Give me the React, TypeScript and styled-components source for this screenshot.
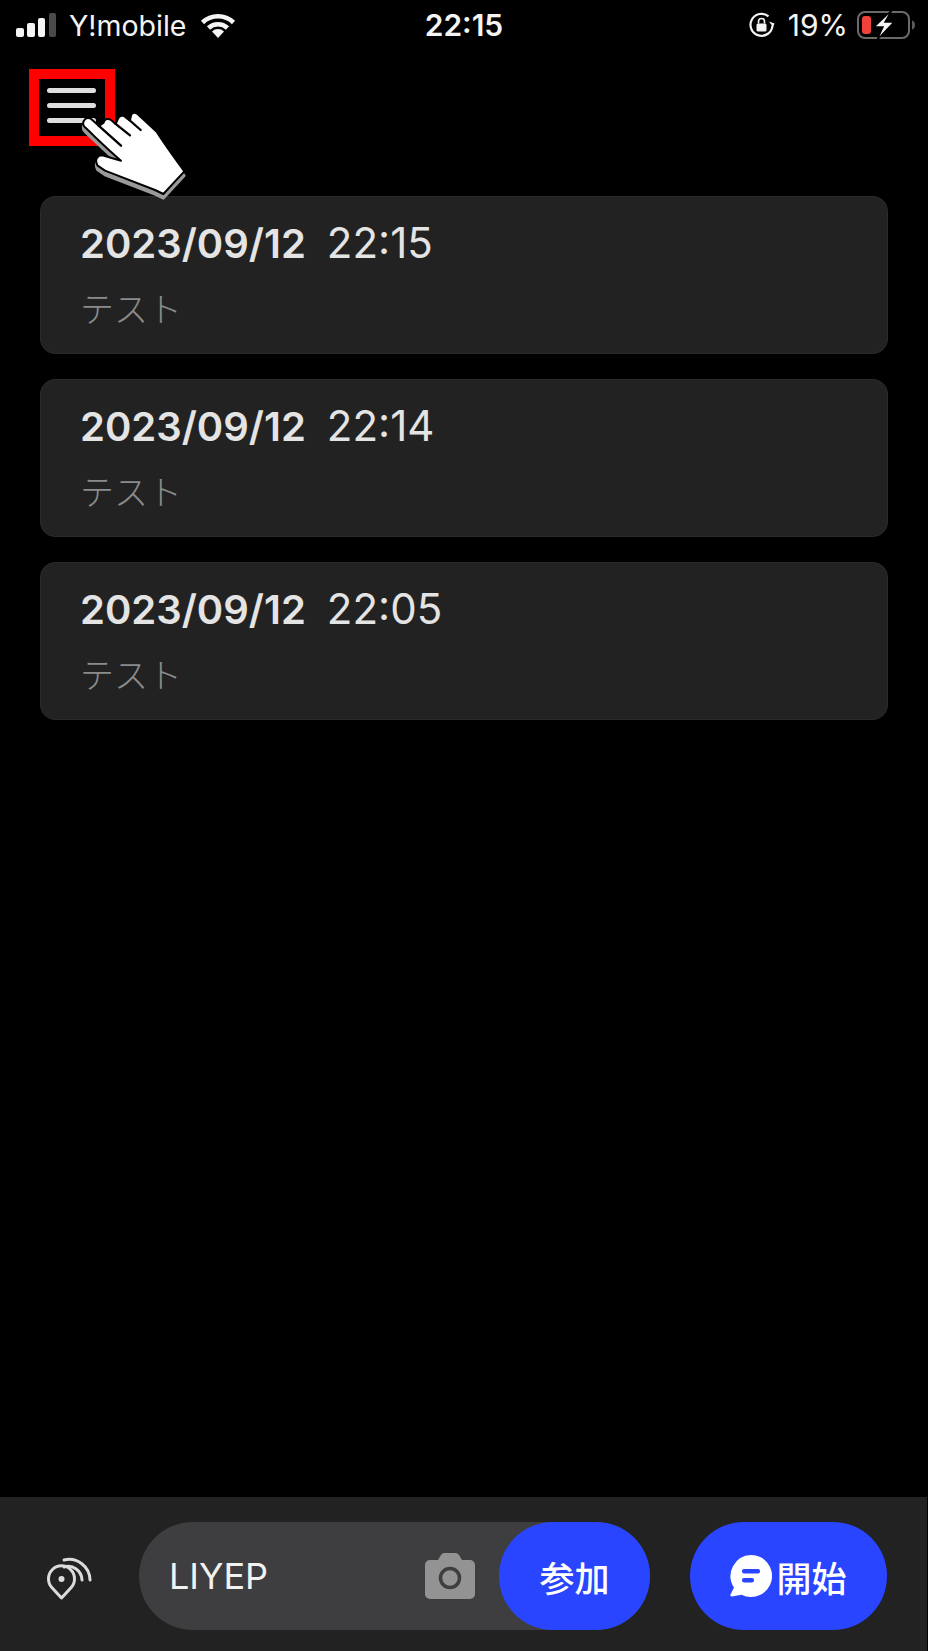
import React from "react";
import styled, { createGlobalStyle } from "styled-components";

const GlobalStyle = createGlobalStyle`
  html, body {
    margin: 0;
    padding: 0;
    background: #000;
  }
  * {
    box-sizing: border-box;
  }
`;

const FONT = `Inter, "Noto Sans CJK JP", sans-serif`;

const sessions = [
  { date: "2023/09/12", time: "22:15", title: "テスト" },
  { date: "2023/09/12", time: "22:14", title: "テスト" },
  { date: "2023/09/12", time: "22:05", title: "テスト" },
];

const HAND_OUTLINE =
  "M27 62 C32 52 45 52 52 60 L72 78 L86 68 C88 56 100 54 108 60 L122 72 L128 58 C132 46 145 44 152 52 L165 62 L168 46 C172 36 182 36 190 44 L245 95 C270 135 300 175 328 214 L265 282 L240 270 L90 212 L68 197 C58 180 66 166 82 166 L138 182 C100 150 60 110 30 82 C22 74 23 68 27 62 Z";

const SignalIcon = () => (
  <svg width="42" height="24" viewBox="0 0 42 24">
    <rect x="0" y="15" width="8" height="9" rx="2" fill="#f4f4f4" />
    <rect x="11" y="10" width="8" height="14" rx="2" fill="#f4f4f4" />
    <rect x="22" y="5" width="7" height="19" rx="2" fill="#f4f4f4" />
    <rect x="33" y="0" width="7" height="24" rx="2" fill="#4a4a4a" />
  </svg>
);

const WifiIcon = () => (
  <svg width="38" height="28" viewBox="0 0 38 28">
    <path d="M19 27l-6-6.6a8.6 8.6 0 0 1 12 0z" fill="#f4f4f4" />
    <path d="M3.5 11.5a22.500 22.500 0 0 1 31 0" fill="none" stroke="#f4f4f4" strokeWidth="4.600" />
    <path d="M9.500 17a14 14 0 0 1 19 0" fill="none" stroke="#f4f4f4" strokeWidth="4.600" />
  </svg>
);

const LockRotationIcon = () => (
  <svg width="28" height="28" viewBox="0 0 28 28">
    <path d="M24.500 14.500A11 11 0 1 1 20.500 5.300" fill="none" stroke="#f4f4f4" strokeWidth="2.200" />
    <path d="M21 10.500l5.500 2-1.500 3.500z" fill="#f4f4f4" />
    <rect x="8.500" y="12.500" width="10" height="8" rx="1.500" fill="#f4f4f4" />
    <path d="M10.500 12.500V10.500a3 3 0 0 1 6 0v2" fill="none" stroke="#f4f4f4" strokeWidth="1.600" />
  </svg>
);

const BatteryIcon = () => (
  <svg width="60" height="32" viewBox="0 0 60 32">
    <rect x="2" y="3" width="51" height="26" rx="7" fill="none" stroke="#6a6a6a" strokeWidth="2" />
    <rect x="6" y="7" width="9" height="18" rx="3" fill="#f0413a" />
    <path d="M56 11.500c2 .5 3 2 3 4.500s-1 4-3 4.500z" fill="#5a5a5a" />
    <path d="M36 1 L18 18 H27 L21 31 L38 13 H29 Z" fill="#f8f8f8" stroke="#000" strokeWidth="1.500" />
  </svg>
);

const HandPointer = () => (
  <svg width="124" height="108" viewBox="0 0 372 324">
    <path
      d={HAND_OUTLINE}
      fill="#9a9a9a"
      stroke="#9a9a9a"
      strokeWidth="8"
      strokeLinejoin="round"
      transform="translate(0 13)"
    />
    <path d={HAND_OUTLINE} fill="#fff" stroke="#000" strokeWidth="6" strokeLinejoin="round" />
    <g stroke="#000" strokeWidth="7" strokeLinecap="round">
      <path d="M70 76 L138 137" />
      <path d="M120 70 L165 106" />
      <path d="M163 60 L197 90" />
    </g>
  </svg>
);

const NearbyIcon = () => (
  <svg width="46" height="50" viewBox="0 0 46 50">
    <path
      d="M15.500 47 L5.800 36.500 A13 13 0 1 1 25.200 36.500 Z"
      fill="none"
      stroke="#dcdcdc"
      strokeWidth="3"
      strokeLinejoin="round"
    />
    <circle cx="15.500" cy="28" r="3" fill="#dcdcdc" />
    <path d="M18 9 A 21 21 0 0 1 44 29" fill="none" stroke="#dcdcdc" strokeWidth="3" strokeLinecap="round" />
    <path d="M18 16 A 14 14 0 0 1 36 29" fill="none" stroke="#dcdcdc" strokeWidth="3" strokeLinecap="round" />
  </svg>
);

const CameraIcon = () => (
  <svg width="50" height="46" viewBox="0 0 50 46">
    <path
      d="M5 7 H13 L16 2 C16.500 1 18 0 19 0 H31 C32 0 33.500 1 34 2 L37 7 H45 A5 5 0 0 1 50 12 V41 A5 5 0 0 1 45 46 H5 A5 5 0 0 1 0 41 V12 A5 5 0 0 1 5 7 Z"
      fill="#939393"
    />
    <circle cx="25" cy="25" r="9.500" fill="none" stroke="#3e3e40" strokeWidth="3.500" />
  </svg>
);

const ChatIcon = () => (
  <svg width="42" height="42" viewBox="0 0 42 42">
    <path d="M21 0a21 21 0 1 1-9.500 39.700L2 41.500c-1.500.2-2-.8-1.500-2L4 32.500A21 21 0 0 1 21 0z" fill="#fff" />
    <rect x="12" y="14" width="18" height="4.500" rx="2" fill="#2a45ff" />
    <rect x="12" y="23" width="12" height="4.500" rx="2" fill="#2a45ff" />
  </svg>
);

export default function App() {
  return (
    <>
      <GlobalStyle />
      <Page>
        <StatusBar>
          <StatusLeft>
            <SignalIcon />
            <Carrier>Y!mobile</Carrier>
            <WifiIcon />
          </StatusLeft>
          <Clock>22:15</Clock>
          <StatusRight>
            <LockRotationIcon />
            <Percent>19%</Percent>
            <BatteryIcon />
          </StatusRight>
        </StatusBar>

        <MenuRow>
          <MenuHighlight>
            <MenuLine />
            <MenuLine />
            <MenuLine />
          </MenuHighlight>
          <HandOverlay>
            <HandPointer />
          </HandOverlay>
        </MenuRow>

        <SessionList>
          {sessions.map((session) => (
            <SessionCard key={session.time}>
              <SessionHeading>
                <SessionDate>{session.date}</SessionDate>
                <SessionTime>{session.time}</SessionTime>
              </SessionHeading>
              <SessionTitle>{session.title}</SessionTitle>
            </SessionCard>
          ))}
        </SessionList>

        <BottomBar>
          <NearbyButton>
            <NearbyIcon />
          </NearbyButton>
          <CodeField>
            <CodeText>LIYEP</CodeText>
            <CameraIcon />
            <JoinButton>参加</JoinButton>
          </CodeField>
          <StartButton>
            <ChatIcon />
            開始
          </StartButton>
        </BottomBar>
      </Page>
    </>
  );
}

const Page = styled.div`
  width: 928px;
  height: 1651px;
  display: flex;
  flex-direction: column;
  background: #000;
  font-family: ${FONT};
  overflow: hidden;
`;

const StatusBar = styled.div`
  height: 50px;
  flex: none;
  padding: 0 12px 0 16px;
  display: grid;
  grid-template-columns: 1fr auto 1fr;
  align-items: center;
  color: #f4f4f4;
`;

const StatusLeft = styled.div`
  display: flex;
  align-items: center;
  gap: 11px;
`;

const Carrier = styled.span`
  font-size: 28.5px;
  margin-right: 2px;
`;

const Clock = styled.span`
  font-size: 30px;
  font-weight: 600;
  margin-right: 4px;
`;

const StatusRight = styled.div`
  display: flex;
  align-items: center;
  justify-content: flex-end;
  gap: 8px;
`;

const Percent = styled.span`
  font-size: 30px;
  margin-left: 4px;
`;

const MenuRow = styled.div`
  position: relative;
  height: 146px;
  flex: none;
  padding: 19px 0 0 29px;
`;

const MenuHighlight = styled.div`
  width: 86px;
  height: 77px;
  border: 10px solid #ff0000;
  padding: 9px 9px 0 8px;
  display: flex;
  flex-direction: column;
  gap: 10px;
`;

const MenuLine = styled.div`
  height: 5px;
  border-radius: 3px;
  background: #dedede;
`;

const HandOverlay = styled.div`
  position: absolute;
  left: 75px;
  top: 50px;
  line-height: 0;
`;

const SessionList = styled.div`
  display: flex;
  flex-direction: column;
  gap: 25px;
  padding: 0 40px;
`;

const SessionCard = styled.div`
  height: 158px;
  padding: 21px 40px 0 39px;
  background: #222222;
  border: 1px solid #2b2b2b;
  border-radius: 15px;
`;

const SessionHeading = styled.div`
  display: flex;
  align-items: baseline;
  gap: 21px;
  color: #e4e4e4;
  line-height: 50px;
`;

const SessionDate = styled.span`
  font-size: 40px;
  font-weight: 600;
`;

const SessionTime = styled.span`
  font-size: 42px;
  font-weight: 400;
`;

const SessionTitle = styled.div`
  margin-top: 19px;
  font-size: 34px;
  line-height: 44px;
  color: #8b8b8b;
  font-weight: 300;
`;

const BottomBar = styled.div`
  margin-top: auto;
  height: 154px;
  flex: none;
  margin-right: 1px;
  padding: 25px 40px 0 0;
  background: #222222;
  display: flex;
  align-items: flex-start;
`;

const NearbyButton = styled.div`
  width: 139px;
  height: 108px;
  padding-left: 46px;
  display: flex;
  align-items: center;
  line-height: 0;
`;

const CodeField = styled.div`
  width: 511px;
  height: 108px;
  padding-left: 30px;
  border-radius: 54px;
  background: #3e3e40;
  display: flex;
  align-items: center;
`;

const CodeText = styled.span`
  flex: 1;
  font-size: 36px;
  font-weight: 400;
  color: #f2f2f2;
`;

const PillButton = styled.div`
  height: 108px;
  border-radius: 54px;
  background: #2a45ff;
  color: #ffffff;
  font-size: 35px;
  font-weight: 500;
  display: flex;
  align-items: center;
  justify-content: center;
`;

const JoinButton = styled(PillButton)`
  width: 151px;
  margin-left: 24px;
  flex: none;
`;

const StartButton = styled(PillButton)`
  width: 197px;
  margin-left: 40px;
  gap: 4px;
`;
